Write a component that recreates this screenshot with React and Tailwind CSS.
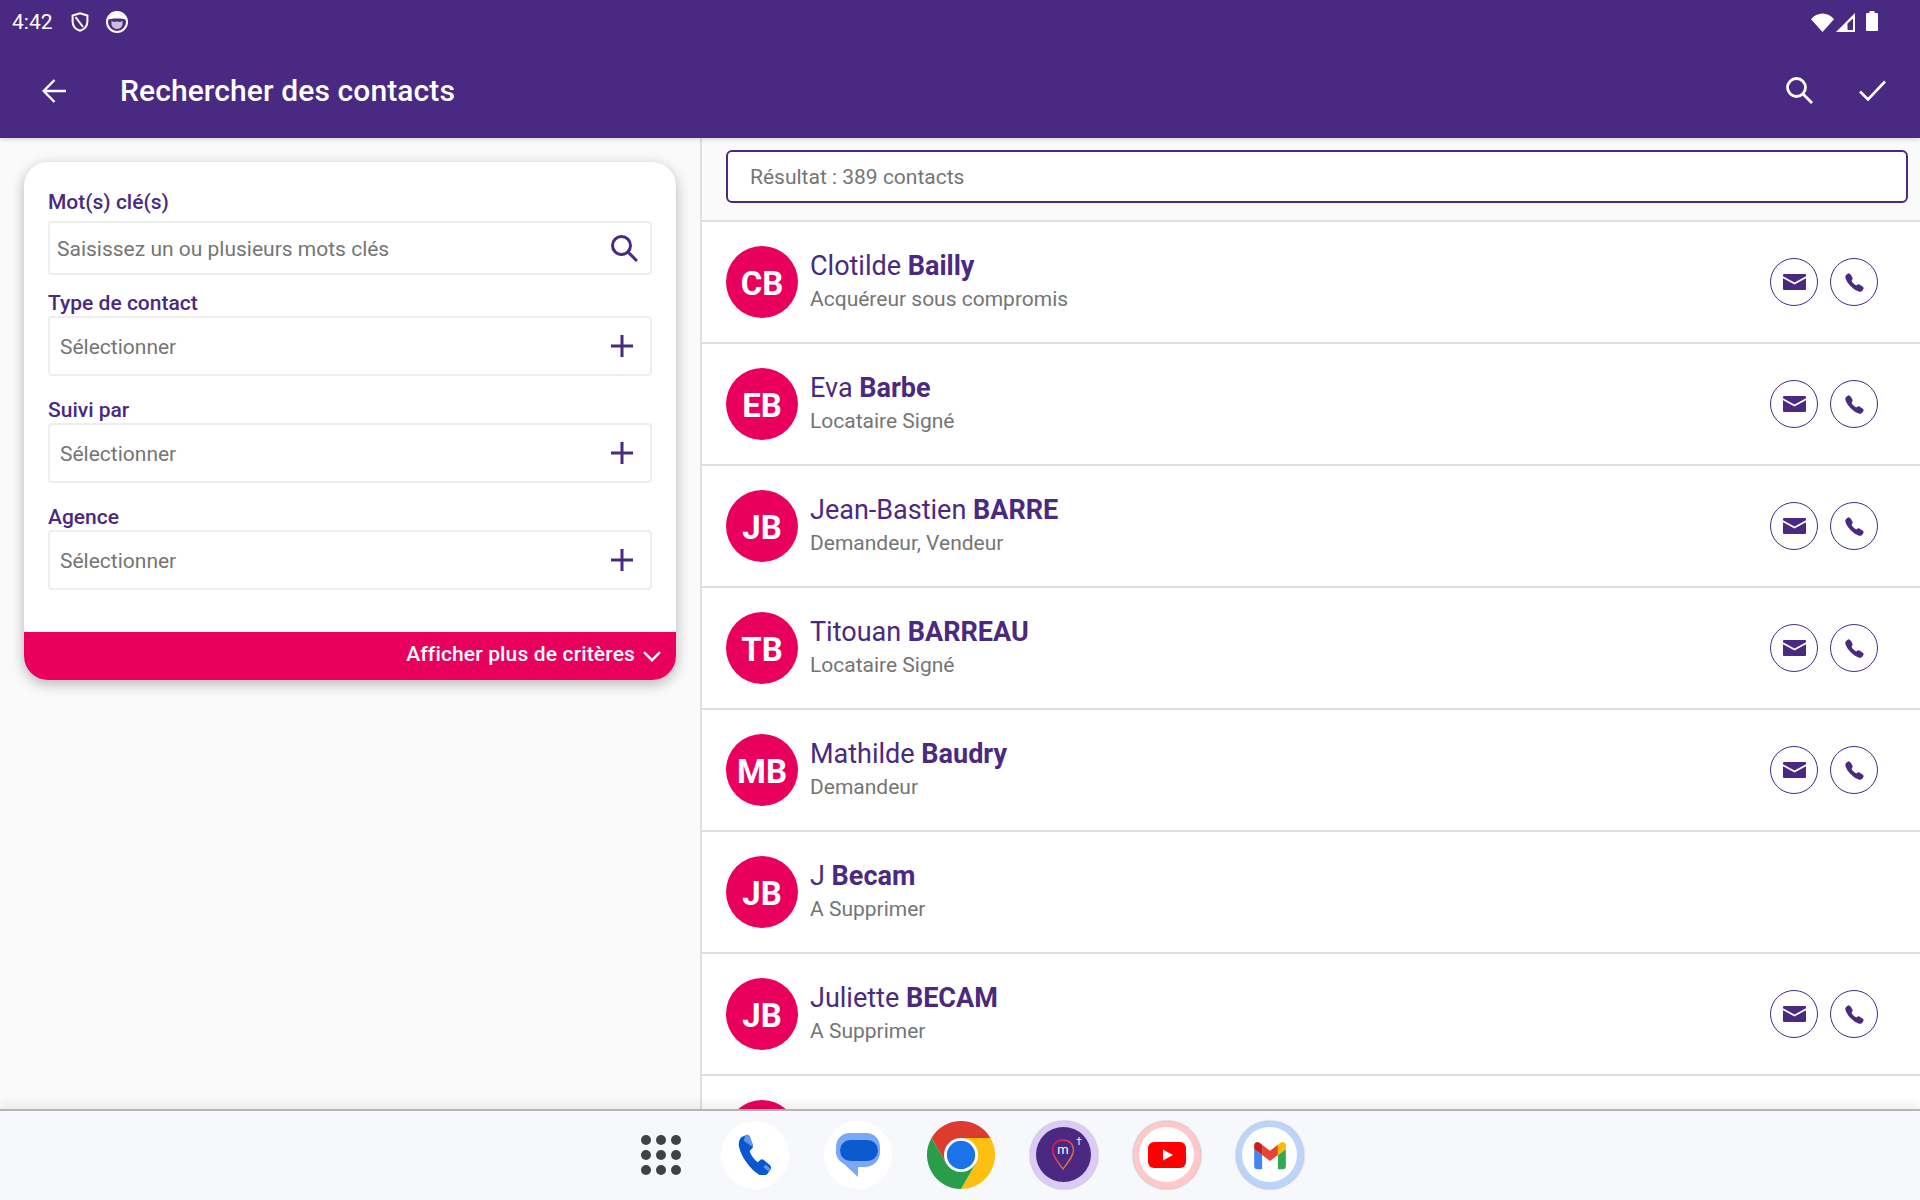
import { IoCall } from 'react-icons/io5';

const CONTACTS = [
  { initials: 'CB', first: 'Clotilde', last: 'Bailly', sub: 'Acquéreur sous compromis', actions: true },
  { initials: 'EB', first: 'Eva', last: 'Barbe', sub: 'Locataire Signé', actions: true },
  { initials: 'JB', first: 'Jean-Bastien', last: 'BARRE', sub: 'Demandeur, Vendeur', actions: true },
  { initials: 'TB', first: 'Titouan', last: 'BARREAU', sub: 'Locataire Signé', actions: true },
  { initials: 'MB', first: 'Mathilde', last: 'Baudry', sub: 'Demandeur', actions: true },
  { initials: 'JB', first: 'J', last: 'Becam', sub: 'A Supprimer', actions: false },
  { initials: 'JB', first: 'Juliette', last: 'BECAM', sub: 'A Supprimer', actions: true },
];

function StatusBar() {
  return (
    <div className="flex h-[44px] items-center justify-between pl-[12px] pr-[42px] text-white">
      <div className="flex items-center">
        <span className="text-[21px] leading-none">4:42</span>
        <svg className="ml-[18px]" width="18" height="20" viewBox="0 0 18 20" fill="none" stroke="#fff" strokeWidth="2">
          <path d="M9 1.2 16.4 3.6v6c0 4.4-3.2 7.8-7.4 9.2C4.8 17.400 1.600 14 1.600 9.600v-6z" />
          <path d="M4.500 5 12 15" />
        </svg>
        <svg className="ml-[17px]" width="22" height="22" viewBox="0 0 22 22">
          <circle cx="11" cy="11" r="10" fill="none" stroke="#fff" strokeWidth="2" />
          <path d="M2 9c2-5 5-7 9-7s7 2 9 7c-2-1-4-1.500-9-1.500S4 8 2 9z" fill="#fff" />
          <path d="M5.500 9.500 7.500 11l3.500-.5 3.500.5 2-1.500V14c-1 2.500-3.200 4-5.500 4s-4.500-1.500-5.500-4z" fill="#cbbfe0" />
        </svg>
      </div>
      <div className="flex items-center">
        <svg width="23" height="19" viewBox="0 0 23 19" fill="#fff">
          <path d="M11.500 19 0 6.200C3 2.600 7 .5 11.500.5S20 2.600 23 6.200z" />
        </svg>
        <svg className="ml-[2px]" width="19" height="19" viewBox="0 0 19 19">
          <path d="M19 0v19H0z" fill="#fff" />
          <path d="M17 5.500V17H11.500V10.500z" fill="#4a2982" stroke="none" />
        </svg>
        <svg className="ml-[11px] -mt-[2px]" width="12" height="20" viewBox="0 0 12 20" fill="#fff">
          <path d="M3.500 0h5v2H11a1 1 0 0 1 1 1v16a1 1 0 0 1-1 1H1a1 1 0 0 1-1-1V3a1 1 0 0 1 1-1h2.500z" />
        </svg>
      </div>
    </div>
  );
}

function Toolbar() {
  return (
    <div className="flex h-[94px] items-center pb-[1px] pl-[42px] pr-[34px] text-white">
      <svg width="24" height="24" viewBox="0 0 24 24" fill="none" stroke="#fff" strokeWidth="2.4">
        <path d="M24 12H2M12.500 1 1.700 12l10.800 11" />
      </svg>
      <h1 className="ml-[54px] flex-1 text-[30px] font-medium leading-none tracking-[0.1px]">Rechercher des contacts</h1>
      <svg width="27" height="27" viewBox="0 0 27 27" fill="none" stroke="#fff" strokeWidth="2.800">
        <circle cx="10.500" cy="10.500" r="9" />
        <path d="m17 17 9 9" />
      </svg>
      <svg className="ml-[46px]" width="27" height="21" viewBox="0 0 27 21" fill="none" stroke="#fff" strokeWidth="2.600">
        <path d="M1 11.500 9 19.500 26 1.500" />
      </svg>
    </div>
  );
}

function PlusIcon() {
  return (
    <svg width="22" height="22" viewBox="0 0 22 22" fill="none" stroke="#4a2982" strokeWidth="3">
      <path d="M11 0v22M0 11h22" />
    </svg>
  );
}

function SelectField({ label, top = 'mt-[22px]' }) {
  return (
    <>
      <div className={`${top} h-[24px] text-[21px] font-medium leading-[24px] text-[#4a2982]`}>{label}</div>
      <div className="mt-[1px] flex h-[60px] items-center justify-between rounded-[4px] border-2 border-[#eeeeee] pl-[10px] pr-[17px] text-[21px] text-[#757575]">
        <span className="pt-[3px]">Sélectionner</span>
        <PlusIcon />
      </div>
    </>
  );
}

function SearchCard() {
  return (
    <div className="overflow-hidden rounded-[24px] bg-white shadow-[0_4px_14px_rgba(0,0,0,0.28)]">
      <div className="px-[24px] pt-[28px]">
        <div className="h-[24px] text-[21px] font-medium leading-[24px] text-[#4a2982]">Mot(s) clé(s)</div>
        <div className="mt-[7px] flex h-[54px] items-center justify-between rounded-[4px] border-2 border-[#eeeeee] pl-[7px] pr-[12px] text-[21px] text-[#757575]">
          <span className="pt-[3px]">Saisissez un ou plusieurs mots clés</span>
          <svg width="27" height="27" viewBox="0 0 27 27" fill="none" stroke="#4a2982" strokeWidth="3">
            <circle cx="10.500" cy="10.500" r="9" />
            <path d="m17 17 9 9" />
          </svg>
        </div>
        <SelectField label="Type de contact" top="mt-[16px]" />
        <SelectField label="Suivi par" />
        <SelectField label="Agence" />
      </div>
      <div className="mt-[42px] flex h-[48px] items-center justify-end bg-[#e8005c] pb-[2px] pr-[15px] text-[21px] font-medium tracking-[0.15px] text-white">
        <span>Afficher plus de critères</span>
        <svg className="ml-[8px] mt-[2px]" width="18" height="11" viewBox="0 0 18 11" fill="none" stroke="#fff" strokeWidth="2.400">
          <path d="m1 1.200 8 8 8-8" />
        </svg>
      </div>
    </div>
  );
}

function ContactRow({ contact }) {
  return (
    <div className="flex h-[122px] shrink-0 items-center border-b-2 border-[#e0e0e0] bg-white pl-[24px] pr-[42px]">
      <div className="flex h-[72px] w-[72px] items-center justify-center rounded-full bg-[#e8005c] pt-[3px] text-[33px] font-bold text-white">
        {contact.initials}
      </div>
      <div className="ml-[12px] flex-1">
        <div className="text-[27px] leading-[32px] text-[#4a2982]">
          {contact.first} <span className="font-bold">{contact.last}</span>
        </div>
        <div className="mt-[2px] text-[21px] leading-[30px] text-[#757575]">{contact.sub}</div>
      </div>
      {contact.actions && (
        <div className="flex gap-[12px]">
          <div className="flex h-[48px] w-[48px] items-center justify-center rounded-full border border-[#4a2982]">
            <svg width="23" height="16" viewBox="0 0 23 16">
              <path d="M1 0h21a1 1 0 0 1 1 1v1.200L11.500 8.500 0 2.200V1a1 1 0 0 1 1-1z" fill="#4a2982" />
              <path d="M0 4.200 11.500 10.500 23 4.200V15a1 1 0 0 1-1 1H1a1 1 0 0 1-1-1z" fill="#4a2982" />
            </svg>
          </div>
          <div className="flex h-[48px] w-[48px] items-center justify-center rounded-full border border-[#4a2982]">
            <IoCall size={21} color="#4a2982" />
          </div>
        </div>
      )}
    </div>
  );
}

function ResultsPanel() {
  return (
    <div className="flex min-w-0 flex-1 flex-col border-l-2 border-[#e0e0e0]">
      <div className="h-[82px] shrink-0 bg-[#fafafa] pl-[24px] pr-[12px] pt-[12px]">
        <div className="flex h-[53px] items-center rounded-[6px] border-2 border-[#4a2982] bg-white pl-[22px] pt-[3px] text-[21px] text-[#757575]">
          Résultat : 389 contacts
        </div>
      </div>
      <div className="shrink-0 border-t-2 border-[#e0e0e0]" />
      {CONTACTS.map((c, i) => (
        <ContactRow key={i} contact={c} />
      ))}
      <div className="h-[122px] shrink-0 bg-white pl-[24px] pt-[24px]">
        <div className="h-[72px] w-[72px] rounded-full bg-[#e8005c]" />
      </div>
    </div>
  );
}

function DockIcon({ ring, children }) {
  return (
    <div className={`flex h-[68px] w-[68px] shrink-0 items-center justify-center rounded-full ${ring}`}>
      {children}
    </div>
  );
}

function Dock() {
  return (
    <div className="relative z-10 flex h-[91px] shrink-0 items-center justify-center border-t-2 border-[#b4b4b4] bg-[#f7f8fc] pb-[2px] pl-[24px] shadow-[0_-6px_8px_rgba(0,0,0,0.06)]">
      <div className="mr-[40px] grid w-[40px] grid-cols-3 gap-[5px]">
        {Array.from({ length: 9 }).map((_, i) => (
          <span key={i} className="h-[10px] w-[10px] rounded-full bg-[#3c4446]" />
        ))}
      </div>
      <div className="flex gap-[35px]">
        <DockIcon ring="bg-white">
          <svg width="34" height="41" viewBox="0 0 38 40" preserveAspectRatio="none">
            <path d="M8 1.500c2-1.500 4-1 5 1l3.500 8c.6 1.500.2 3-1 4l-2.500 2c1.500 4 5 8.500 9 11l2.500-2c1.200-1 2.800-1.100 4-.3l7 5c1.800 1.300 2 3.300.5 5l-3 3.500c-2 2-5 2.800-8 1.800C14 35 3 22 1 12c-.7-4 1-7.500 3-9z" fill="#0b57d0" />
            <path d="M8 1.500c2-1.500 4-1 5 1l3.500 8c.3.800.3 1.500.1 2.200L6.500 6.500z" fill="#5e97f6" />
            <path d="M31 30l5.500 4c-.5 0-1 1-2 2.500l-6-4z" fill="#5e97f6" />
          </svg>
        </DockIcon>
        <DockIcon ring="bg-white">
          <svg width="44" height="44" viewBox="0 0 44 44">
            <path d="M14 0h16c8 0 14 6 14 14v5c0 9-7 15-16 15h-6v10L8 31C3 28 0 24 0 19v-5C0 6 6 0 14 0z" fill="#7ba7f7" />
            <rect x="4" y="7" width="38" height="21" rx="10.500" fill="#0b5ad0" />
          </svg>
        </DockIcon>
        <svg width="68" height="68" viewBox="0 0 48 48" className="shrink-0">
          <path d="M24 12H44.800A24 24 0 0 0 3.200 12L13.600 30 24 24z" fill="#dc3c2e" />
          <path d="M44.800 12A24 24 0 0 1 24 48L34.400 30 24 24V12z" fill="#fcc010" />
          <path d="M24 48A24 24 0 0 1 3.200 12L13.600 30 24 24 34.400 30z" fill="#2a9d4a" />
          <circle cx="24" cy="24" r="12" fill="#fff" />
          <circle cx="24" cy="24" r="10" fill="#1a73e8" />
        </svg>
        <DockIcon ring="bg-[#dccbf7] shadow-[0_0_2px_rgba(0,0,0,0.4)]">
          <svg width="55" height="55" viewBox="0 0 55 55">
            <defs>
              <linearGradient id="pin" x1="0" y1="0" x2="1" y2="1">
                <stop offset="0" stopColor="#e8005c" />
                <stop offset="1" stopColor="#f39a2c" />
              </linearGradient>
            </defs>
            <circle cx="27.500" cy="27.500" r="27.500" fill="#4a2982" />
            <path d="M27 13c6.500 0 10.500 4.500 10.500 10S33 34 27 42c-6-8-10.500-13.500-10.500-19S20.500 13 27 13z" fill="none" stroke="url(#pin)" strokeWidth="1.300" />
            <text x="27" y="27" textAnchor="middle" fontSize="13" fill="#fff" fontFamily="Roboto, sans-serif">m</text>
            <text x="43" y="18" textAnchor="middle" fontSize="10" fill="#fff" fontFamily="Roboto, sans-serif">†</text>
          </svg>
        </DockIcon>
        <DockIcon ring="bg-[#ffc9c9] shadow-[0_0_2px_rgba(0,0,0,0.4)]">
          <div className="flex h-[55px] w-[55px] items-center justify-center rounded-full bg-white">
            <svg width="38" height="26" viewBox="0 0 38 26">
              <rect width="38" height="26" rx="6" fill="#ff0000" />
              <path d="M15 7.500v11L25 13z" fill="#fff" />
            </svg>
          </div>
        </DockIcon>
        <DockIcon ring="bg-[#bcd4fa] shadow-[0_0_2px_rgba(0,0,0,0.4)]">
          <div className="flex h-[55px] w-[55px] items-center justify-center rounded-full bg-white">
            <svg width="38" height="38" viewBox="0 0 48 48">
              <path d="M8 42h6V24L4 16.500V38a4 4 0 0 0 4 4z" fill="#4285f4" />
              <path d="M34 42h6a4 4 0 0 0 4-4V16.500L34 24z" fill="#34a853" />
              <path d="M14 24V11l10 7.500L34 11v13l-10 7.500z" fill="#ea4335" />
              <path d="M4 11.500v5L14 24V11L10.400 8.300C7.500 6.200 4 8.200 4 11.500z" fill="#c5221f" />
              <path d="M34 11v13l10-7.500v-5c0-3.300-3.500-5.300-6.400-3.200z" fill="#fbbc04" />
            </svg>
          </div>
        </DockIcon>
      </div>
    </div>
  );
}

export default function App() {
  return (
    <div className="flex h-[1200px] w-[1920px] flex-col overflow-hidden bg-[#fafafa] font-[Roboto,sans-serif]">
      <header className="relative z-10 h-[138px] shrink-0 bg-[#4a2982] shadow-[0_2px_4px_rgba(0,0,0,0.12)]">
        <StatusBar />
        <Toolbar />
      </header>
      <main className="flex min-h-0 flex-1 overflow-hidden">
        <aside className="w-[700px] shrink-0 pl-[24px] pr-[24px] pt-[24px]">
          <SearchCard />
        </aside>
        <ResultsPanel />
      </main>
      <Dock />
    </div>
  );
}
